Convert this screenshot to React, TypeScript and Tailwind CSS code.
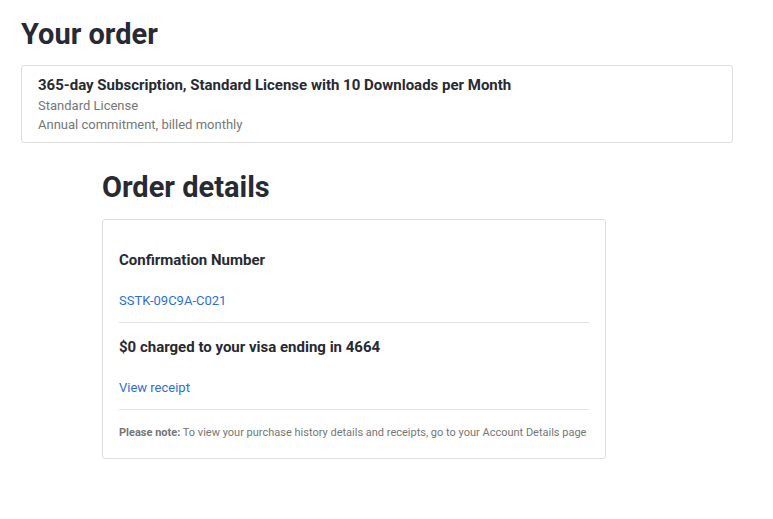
export default function App() {
  return (
    <div className="min-h-[519px] w-[773px] bg-white pl-[21px] pt-[14px] text-[#272a33]" style={{ fontFamily: "Roboto, 'Noto Sans', sans-serif" }}>
      <h1 className="text-[29px] leading-[40px] font-bold">Your order</h1>
      <div className="mt-[11px] w-[712px] rounded-[3px] border border-[#dedede] px-[16px] pt-[9px] pb-[8px]">
        <div className="text-[15px] leading-[20px] font-bold">365-day Subscription, Standard License with 10 Downloads per Month</div>
        <div className="mt-[1px] text-[13px] leading-[19px] text-[#767676]">Standard License</div>
        <div className="text-[13px] leading-[19px] text-[#767676]">Annual commitment, billed monthly</div>
      </div>
      <div className="ml-[81px] w-[504px]">
        <h2 className="mt-[24px] text-[29px] leading-[40px] font-bold">Order details</h2>
        <div className="mt-[12px] rounded-[3px] border border-[#dedede] px-[16px] pt-[30px] pb-[17px]">
          <div className="text-[15px] leading-[20px] font-bold">Confirmation Number</div>
          <div className="mt-[21px] text-[13px] leading-[20px] text-[#2d6fd2]">SSTK-09C9A-C021</div>
          <div className="mt-[11px] border-t border-[#e2e2e2]"></div>
          <div className="mt-[14px] text-[15px] leading-[20px] font-bold">$0 charged to your visa ending in 4664</div>
          <div className="mt-[21px] text-[13px] leading-[20px] text-[#2d6fd2]">View receipt</div>
          <div className="mt-[11px] border-t border-[#e2e2e2]"></div>
          <div className="mt-[15px] text-[11px] leading-[16px] text-[#767676]">
            <span className="font-bold">Please note:</span> To view your purchase history details and receipts, go to your Account Details page
          </div>
        </div>
      </div>
    </div>
  );
}
